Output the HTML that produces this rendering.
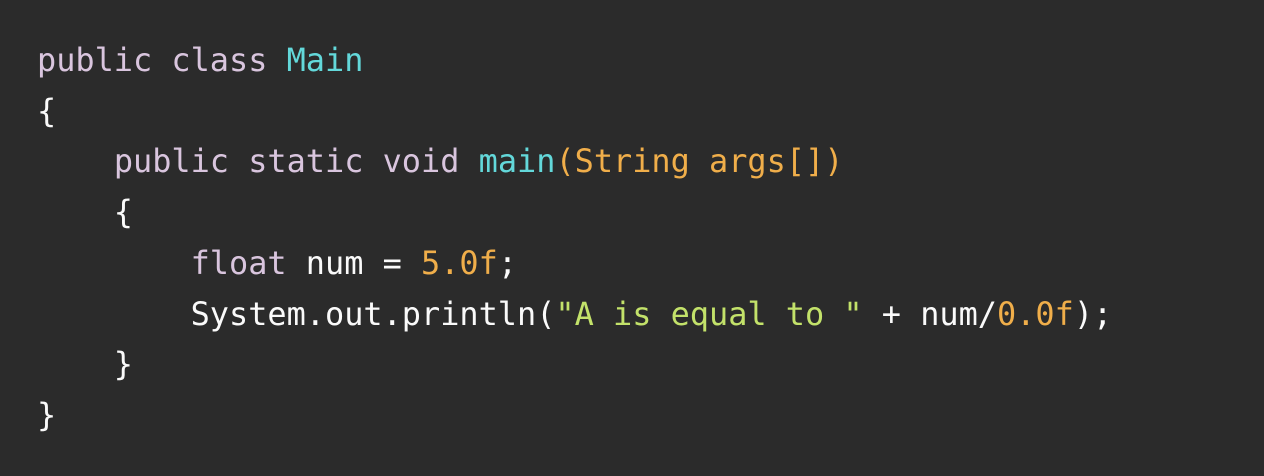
<!DOCTYPE html>
<html><head><meta charset="utf-8"><style>
html,body{margin:0;padding:0;background:#2b2b2b;width:1264px;height:476px;overflow:hidden}
pre{margin:0;position:absolute;left:37px;top:35px;font-family:"DejaVu Sans Mono","Liberation Mono",monospace;font-size:31.9px;line-height:50.7px;color:#fafafa}
.k{color:#d9c5de}.c{color:#63d8da}.o{color:#f0ae4a}.g{color:#c3e26a}
</style></head><body>
<pre><span class="k">public class</span> <span class="c">Main</span>
{
    <span class="k">public static void</span> <span class="c">main</span><span class="o">(String args[])</span>
    {
        <span class="k">float</span> num = <span class="o">5.0f</span>;
        System.out.println(<span class="g">"A is equal to "</span> + num/<span class="o">0.0f</span>);
    }
}</pre>
</body></html>
